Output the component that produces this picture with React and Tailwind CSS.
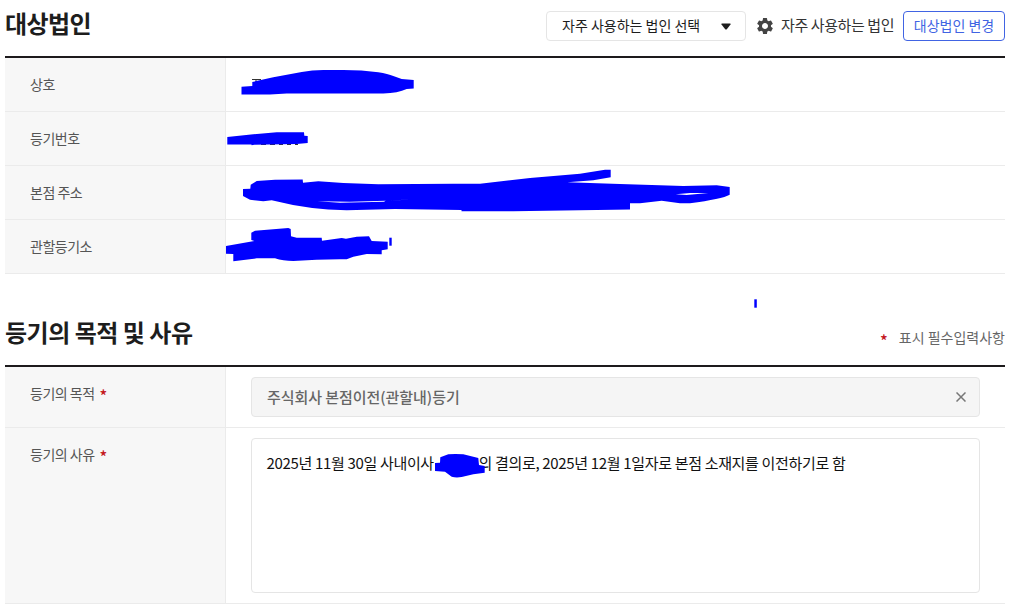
import React, { useState } from 'react';
import { MdSettings } from 'react-icons/md';

const companyRows = ['상호', '등기번호', '본점 주소', '관할등기소'];

// pen strokes hiding the private values
const strokes = [
  'M241.5 86.7 252.3 86V82L273.3 77.3 301.7 72Q312 70 323.3 70H343.3Q362 70 378.3 72.3 388 74 393.3 76L401.7 79 413.7 80V88.5L406.7 89Q398 93 383.3 93.5H286.7L270 94.5H241.5Z',
  'M227.3 137 253.3 134.3 276.7 132.3H304L304.3 135.7 307.7 136V143L296.7 144 254.3 144.7 251.7 145.3 251.3 144.5H227.3Z',
  'M243 189 250.3 188.7 250.7 184.7 256.7 181 275 179.7 302.7 179.5 303 182.7 318.3 181.3 343.3 183 378.3 184.3 453.3 183.7 480 183.7 530 178 580 173.7 605 169.7H610.7V177.3L593.3 180.3 567.3 182.3 620 184 683.3 186 716.7 185.3 729.7 187V194.7Q722 199 690 203.3H680L661.7 200.7 640 203.3H630V209.5L513.3 211.3H461.5V210L395 209 346.7 210.3Q310 210 271.7 200.3L263.3 201.3 250 199.7 243 196ZM317.3 201.3 350 201.8 385.7 200.8 384 201.8 340 202.7ZM386 200.7 417 199.2 400 200ZM675.7 194.3 690 193H708.3L686.7 195Z',
  'M226 246 254.3 241 251.3 240V232.7L255 230.7 288.3 228 290.7 229 291 236.3 296.7 237.7H321.7L322 240.7 341.7 238 346 238.7 356.7 236.7 369 236.3 371.7 241 387.7 241.7V249.3L381.7 250.3V254.3L366.7 254 353.3 256.7 346.7 259.3Q320 259 293.3 261 283 261 275 258.3H256.7L233.3 261.3V254L226 253.7Z',
  'M389.3 237.7H391.7V245.7H389.3Z',
  'M754.3 299.3H756.8V307.7H754.3Z',
  'M435 463 440 462.7 440.3 457.3 448.3 454.3Q455 453.6 463.3 454.3L478.3 458 479 465 484.7 466V472.7L473.3 474.3 461.7 477Q456 478 451.7 476.7L445 471.7 435 471Z',
];

// numbers showing through under the strokes
const leftovers = 'M252 79.5h9M256 79.5v3M261 144.5h5M270 144.5h5M279 144.5h4M287 144.5h4M295 144.5h3';

const Star = ({ className = '' }) => (
  <span className={`text-[16px] font-medium text-[#c4161c] ${className}`}>*</span>
);

const RowLabel = ({ children, className = '' }) => (
  <div
    className={`w-[221px] shrink-0 border-r border-[#ebebeb] bg-[#f7f7f7] pl-[25px] text-[14px] tracking-[-0.5px] text-[#555] ${className}`}
  >
    {children}
  </div>
);

const App = () => {
  const [purpose, setPurpose] = useState('주식회사 본점이전(관할내)등기');

  return (
    <div className="relative h-[604px] w-[1015px] overflow-hidden bg-white pr-[10px] pl-[5px] font-['Noto_Sans_CJK_KR','Noto_Sans',sans-serif] text-[#1d1d1d]">
      <section>
        <header className="flex h-14 justify-between">
          <h2 className="pt-[5px] text-[24px] leading-9 font-bold tracking-[-0.55px]">대상법인</h2>
          <div className="mt-[11px] flex h-[30px] items-center">
            <button className="flex h-[30px] w-[200px] items-center justify-between rounded-[4px] border border-[#e5e5e5] pr-3.5 pl-[15px] text-[14px]">
              <span className="pb-px">자주 사용하는 법인 선택</span>
              <svg width="10" height="7" viewBox="0 0 10 7" fill="#1d1d1d">
                <path d="M1 .5h8q1 0 .5 1L6 6Q5 7 4 6L.5 1.5Q0 .5 1 .5Z" />
              </svg>
            </button>
            <MdSettings className="ml-[9px] text-[20px] text-[#444]" />
            <span className="ml-1.5 w-[115px] pb-0.5 text-[15px] tracking-[-0.4px] whitespace-nowrap text-[#333]">자주 사용하는 법인</span>
            <button className="ml-[7px] h-[30px] w-[102px] rounded-[4px] border border-[#4164e3] pb-px text-[14px] whitespace-nowrap text-[#4164e3]">
              대상법인 변경
            </button>
          </div>
        </header>
        <div className="border-t-2 border-[#1d1a1c]">
          {companyRows.map((label) => (
            <div key={label} className="flex h-[54px] border-b border-[#ebebeb]">
              <RowLabel className="leading-[53px]">{label}</RowLabel>
            </div>
          ))}
        </div>
      </section>

      <section className="pt-10">
        <header className="flex h-[51px] justify-between">
          <h2 className="text-[24px] leading-9 font-bold tracking-[-0.5px]">등기의 목적 및 사유</h2>
          <p className="flex pt-[13px] text-[14px] leading-5 text-[#666]">
            <Star className="mr-[11px] pt-[3px]" />표시 필수입력사항
          </p>
        </header>
        <div className="border-t-2 border-[#1d1a1c]">
          <div className="flex h-[61px] border-b border-[#ebebeb]">
            <RowLabel className="flex pt-4 leading-5">등기의 목적<Star className="ml-[5px] pt-0.5" /></RowLabel>
            <div className="flex-1 px-[25px] py-2.5">
              <div className="flex h-10 items-center justify-between rounded-[4px] border border-[#e5e5e5] bg-[#f5f5f5] pr-[13px] pl-[15px] text-[15px] font-medium text-[#666]">
                <span className="tracking-[-0.05px]">{purpose}</span>
                <button onClick={() => setPurpose('')} aria-label="지우기">
                  <svg width="10" height="10" viewBox="0 0 10 10" stroke="#777" strokeWidth="1.5">
                    <path d="M.5.5l9 9M9.5.5l-9 9" />
                  </svg>
                </button>
              </div>
            </div>
          </div>
          <div className="flex h-[176px] border-b border-[#ebebeb]">
            <RowLabel className="flex pt-4 leading-5">등기의 사유<Star className="ml-[5px] pt-0.5" /></RowLabel>
            <div className="flex-1 px-[25px] pt-2.5">
              <div className="flex h-[155px] rounded-[4px] border border-[#e5e5e5] pt-[13px] pl-[14.5px] text-[15px] leading-[22px] tracking-[-0.33px] text-[#111]">
                <span className="w-[212px] whitespace-nowrap">2025년 11월 30일 사내이사</span>
                <span className="whitespace-nowrap">의 결의로, 2025년 12월 1일자로 본점 소재지를 이전하기로 함</span>
              </div>
            </div>
          </div>
        </div>
      </section>

      <svg className="pointer-events-none absolute top-0 left-0" width="1015" height="604" viewBox="0 0 1015 604">
        <path d={leftovers} stroke="#333" />
        {strokes.map((d) => (
          <path key={d} d={d} fill="#00f" fillRule="evenodd" />
        ))}
      </svg>
    </div>
  );
};

export default App;
